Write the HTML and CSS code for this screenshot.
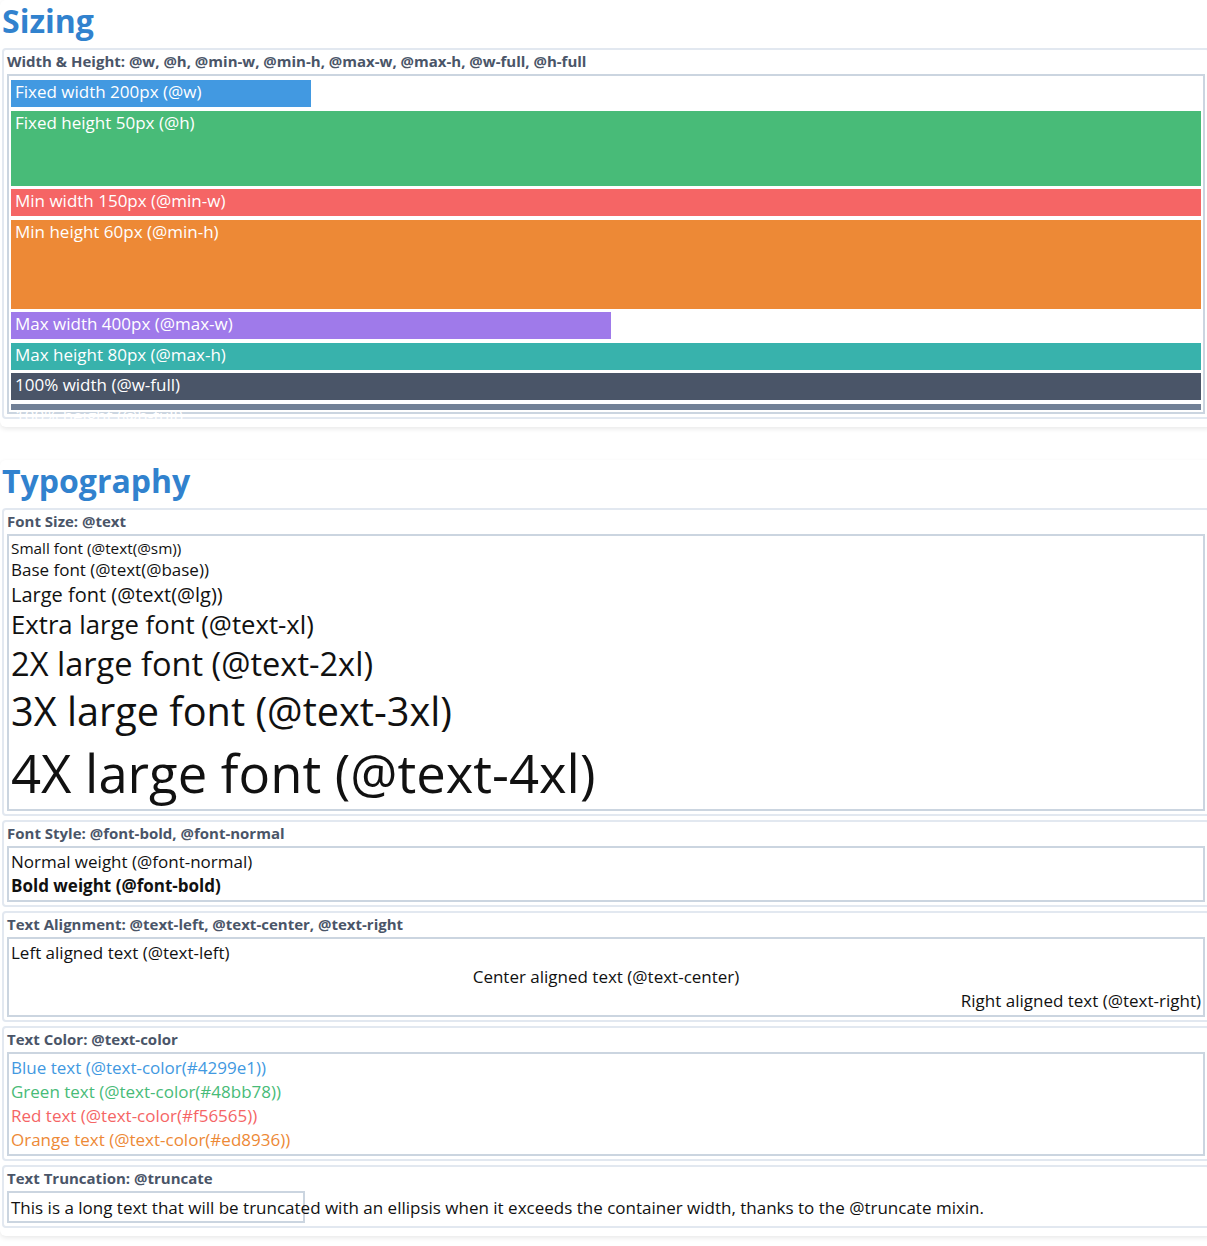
FILE: index.html
```html
<!DOCTYPE html>
<html lang="en">
<head>
<meta charset="utf-8">
<title>Sizing &amp; Typography</title>
<link rel="stylesheet" href="styles.css">
</head>
<body>
<div class="page">
  <section class="card">
    <h2 class="section-title">Sizing</h2>
    <div class="demo">
      <div class="demo-label">Width &amp; Height: @w, @h, @min-w, @min-h, @max-w, @max-h, @w-full, @h-full</div>
      <div class="demo-box sizing-box">
        <div class="bar bar-blue w-fixed">Fixed width 200px (@w)</div>
        <div class="bar bar-green h-fixed">Fixed height 50px (@h)</div>
        <div class="bar bar-red">Min width 150px (@min-w)</div>
        <div class="bar bar-orange h-min">Min height 60px (@min-h)</div>
        <div class="bar bar-purple w-max">Max width 400px (@max-w)</div>
        <div class="bar bar-teal">Max height 80px (@max-h)</div>
        <div class="bar bar-dark">100% width (@w-full)</div>
        <div class="bar bar-slate h-full">100% height (@h-full)</div>
      </div>
    </div>
  </section>

  <section class="card">
    <h2 class="section-title">Typography</h2>
    <div class="demo">
      <div class="demo-label">Font Size: @text</div>
      <div class="demo-box">
        <div class="t-sm">Small font (@text(@sm))</div>
        <div class="t-base">Base font (@text(@base))</div>
        <div class="t-lg">Large font (@text(@lg))</div>
        <div class="t-xl">Extra large font (@text-xl)</div>
        <div class="t-2xl">2X large font (@text-2xl)</div>
        <div class="t-3xl">3X large font (@text-3xl)</div>
        <div class="t-4xl">4X large font (@text-4xl)</div>
      </div>
    </div>
    <div class="demo">
      <div class="demo-label">Font Style: @font-bold, @font-normal</div>
      <div class="demo-box">
        <div class="t-base row">Normal weight (@font-normal)</div>
        <div class="t-base row bold">Bold weight (@font-bold)</div>
      </div>
    </div>
    <div class="demo">
      <div class="demo-label">Text Alignment: @text-left, @text-center, @text-right</div>
      <div class="demo-box">
        <div class="t-base row align-left">Left aligned text (@text-left)</div>
        <div class="t-base row align-center">Center aligned text (@text-center)</div>
        <div class="t-base row align-right">Right aligned text (@text-right)</div>
      </div>
    </div>
    <div class="demo">
      <div class="demo-label">Text Color: @text-color</div>
      <div class="demo-box">
        <div class="t-base row c-blue">Blue text (@text-color(#4299e1))</div>
        <div class="t-base row c-green">Green text (@text-color(#48bb78))</div>
        <div class="t-base row c-red">Red text (@text-color(#f56565))</div>
        <div class="t-base row c-orange">Orange text (@text-color(#ed8936))</div>
      </div>
    </div>
    <div class="demo">
      <div class="demo-label">Text Truncation: @truncate</div>
      <div class="truncate-box t-base">This is a long text that will be truncated with an ellipsis when it exceeds the container width, thanks to the @truncate mixin.</div>
    </div>
  </section>
</div>
</body>
</html>
```

FILE: styles.css
```css
html, body {
  margin: 0;
  padding: 0;
  background: #ffffff;
  overflow-x: hidden;
}

body {
  font-family: "Open Sans", "Noto Sans", "Liberation Sans", sans-serif;
  color: #111111;
}

.page {
  width: 1212px;
}

.card {
  background: #ffffff;
  border-radius: 6px;
  box-shadow: 0 2px 5px rgba(0, 0, 0, 0.09);
  padding: 0 0 4px;
  margin-bottom: 33px;
}

.section-title {
  margin: 0 0 6px 2px;
  font-size: 32px;
  line-height: 42px;
  font-weight: 700;
  color: #3182ce;
}

.demo {
  margin: 0 2px 4px;
  border: 2px solid #e2e8f0;
  border-radius: 4px;
  padding: 3px;
}

.demo-label {
  font-size: 15px;
  line-height: 17px;
  padding-bottom: 4px;
  font-weight: 700;
  color: #4a5568;
}

.demo-box {
  border: 2px solid #cbd5e0;
  padding: 2px;
}

.sizing-box {
  padding: 4px 2px 2px;
}

.bar {
  color: #ffffff;
  font-size: 17px;
  line-height: 23px;
  padding: 0 0 4px 4px;
  margin-bottom: 3.5px;
  white-space: nowrap;
}

.w-fixed { width: 300px; box-sizing: border-box; }
.h-fixed { height: 71px; }
.h-min { min-height: 85px; }
.w-max { max-width: 600px; box-sizing: border-box; }
.h-full { height: 6px; padding-bottom: 0; margin-bottom: 0; }

.bar-blue { background: #4299e1; }
.bar-green { background: #48bb78; }
.bar-red { background: #f56565; }
.bar-orange { background: #ed8936; }
.bar-purple { background: #9f7aea; }
.bar-teal { background: #38b2ac; }
.bar-dark { background: #4a5568; }
.bar-slate { background: #718096; }

.t-sm { font-size: 15.3px; line-height: 20px; }
.t-base { font-size: 17px; line-height: 23px; }
.t-lg { font-size: 20px; line-height: 27px; }
.t-xl { font-size: 25.7px; line-height: 34px; }
.t-2xl { font-size: 32.6px; line-height: 43px; }
.t-3xl { font-size: 39.7px; line-height: 53px; }
.t-4xl { font-size: 52.6px; line-height: 69px; }

.row { line-height: 24px; }

.bold { font-weight: 700; }
.align-left { text-align: left; }
.align-center { text-align: center; }
.align-right { text-align: right; }

.c-blue { color: #4299e1; }
.c-green { color: #48bb78; }
.c-red { color: #f56565; }
.c-orange { color: #ed8936; }

.truncate-box {
  width: 298px;
  box-sizing: border-box;
  border: 2px solid #cbd5e0;
  padding: 2px 2px 1px;
  line-height: 25px;
  white-space: nowrap;
}
```
